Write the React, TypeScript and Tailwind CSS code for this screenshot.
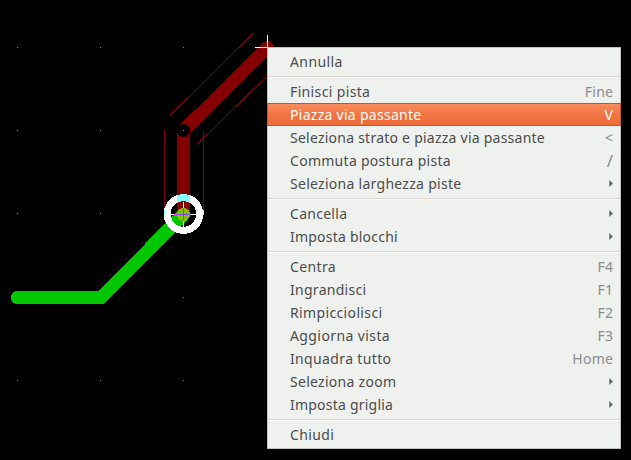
type Item = {
  label: string;
  tracking: string;
  shortcut?: string;
  submenu?: boolean;
  active?: boolean;
};

const groups: Item[][] = [
  [{ label: 'Annulla', tracking: 'tracking-[0.4px]' }],
  [
    { label: 'Finisci pista', tracking: 'tracking-[0.36px]', shortcut: 'Fine' },
    { label: 'Piazza via passante', tracking: 'tracking-[0.28px]', shortcut: 'V', active: true },
    { label: 'Seleziona strato e piazza via passante', tracking: 'tracking-[0.24px]', shortcut: '<' },
    { label: 'Commuta postura pista', tracking: 'tracking-[0.28px]', shortcut: '/' },
    { label: 'Seleziona larghezza piste', tracking: 'tracking-[0.28px]', submenu: true },
  ],
  [
    { label: 'Cancella', tracking: 'tracking-[0.28px]', submenu: true },
    { label: 'Imposta blocchi', tracking: 'tracking-[0.22px]', submenu: true },
  ],
  [
    { label: 'Centra', tracking: 'tracking-[0.36px]', shortcut: 'F4' },
    { label: 'Ingrandisci', tracking: 'tracking-[0.28px]', shortcut: 'F1' },
    { label: 'Rimpicciolisci', tracking: 'tracking-[0.36px]', shortcut: 'F2' },
    { label: 'Aggiorna vista', tracking: 'tracking-[0.4px]', shortcut: 'F3' },
    { label: 'Inquadra tutto', tracking: 'tracking-[0.36px]', shortcut: 'Home' },
    { label: 'Seleziona zoom', tracking: 'tracking-[0.28px]', submenu: true },
    { label: 'Imposta griglia', tracking: 'tracking-[0.22px]', submenu: true },
  ],
  [{ label: 'Chiudi', tracking: 'tracking-[0.4px]' }],
];

const gridX = [17, 100, 183];
const gridY = [47, 130, 213, 297, 380];

function Board() {
  return (
    <svg className="block h-[460px] w-[631px]" viewBox="0 0 631 460" shapeRendering="crispEdges">
      <g fill="none" strokeLinecap="round" strokeLinejoin="round" strokeWidth="13">
        <path d="M183.5 214.5V130.5L267.5 47.5" stroke="#840000" />
        <path d="M17.5 297.5H101L183.5 214.5" stroke="#00c800" />
      </g>
      <path d="M177 196h13v12h-13z" fill="#840000" />
      <circle cx="183.5" cy="130.5" r="6.5" fill="#000" />
      <g fill="none" stroke="#840000" strokeWidth="1">
        <path d="M164.5 130V214M203.5 131V214" />
        <path d="M170 115.5L253.5 33M197 144.5L267.5 75.5" />
      </g>
      <circle cx="183.5" cy="214" r="16.3" fill="none" stroke="#fff" strokeWidth="7" />
      <path d="M177 195.4Q183.5 192.8 190 195.4V202Q183.5 200.5 177 202Z" fill="#84ffff" />
      <path d="M164 210h1v5h-1zM203 210h1v5h-1z" fill="#84ffff" />
      <circle cx="183.5" cy="214.5" r="6.5" fill="#84c000" />
      <path d="M171 214h25v1h-25zM183 202h1v25h-1z" fill="#fff" />
      <path d="M177 214h13v1h-13zM183 208h1v13h-1z" fill="#7b3fff" />
      <path d="M174 214h4v1h-4z" fill="#ff37ff" />
      {gridY.map((y) =>
        gridX.map((x) =>
          x === 183 && y === 213 ? null : <rect key={`${x}-${y}`} x={x} y={y} width="1" height="1" fill="#848484" />,
        ),
      )}
      <path d="M267 35h1v12h-1zM255 47h12v1h-12z" fill="#fff" />
      <path d="M267 41h1v6h-1zM260 47h7v1h-7z" fill="#b5ffff" />
    </svg>
  );
}

function Shortcut({ text, active }: { text: string; active?: boolean }) {
  if (text === '/') {
    return <span className="text-[17px] leading-[21px] text-[#8c8c8c]">/</span>;
  }
  return (
    <span className={active ? 'leading-[21px] text-white' : '-mr-[0.3px] leading-[21px] tracking-[0.3px] text-[#8c8c8c]'}>
      {text}
    </span>
  );
}

function Row({ item }: { item: Item }) {
  return (
    <div
      className={
        item.active
          ? '-mx-px flex h-[23px] items-center justify-between border border-[#c5552b] bg-linear-to-b from-[#fa8c5e] via-[#f17443] to-[#ed6c3a] pr-[7px] pl-[22px] text-white'
          : 'flex h-[23px] items-center justify-between pr-[7px] pl-[22px] text-[#4c4c4c]'
      }
    >
      <span className={`leading-[21px] whitespace-nowrap ${item.tracking}`}>{item.label}</span>
      {item.shortcut && <Shortcut text={item.shortcut} active={item.active} />}
      {item.submenu && (
        <svg className="h-[7px] w-[4px]" viewBox="0 0 4 7">
          <path d="M0.3 0L3.8 3.5L0.3 7Z" fill="#5f5f5f" />
        </svg>
      )}
    </div>
  );
}

export default function App() {
  return (
    <main className="relative h-[460px] w-[631px] overflow-hidden bg-black">
      <Board />
      <div className="absolute top-[47px] left-[267px] h-[402px] w-[354px] border border-[#c3c0bd] bg-[#eff1ee] py-[2px] font-['Noto_Sans',sans-serif] text-[14px]">
        {groups.map((group, i) => (
          <div key={i}>
            {i > 0 && (
              <div className="h-[7px] pt-[3px]">
                <div className="h-[2px] border-t border-b border-t-[#ded5d3] border-b-[#fbf8f6]" />
              </div>
            )}
            {group.map((item) => (
              <Row key={item.label} item={item} />
            ))}
          </div>
        ))}
      </div>
    </main>
  );
}
